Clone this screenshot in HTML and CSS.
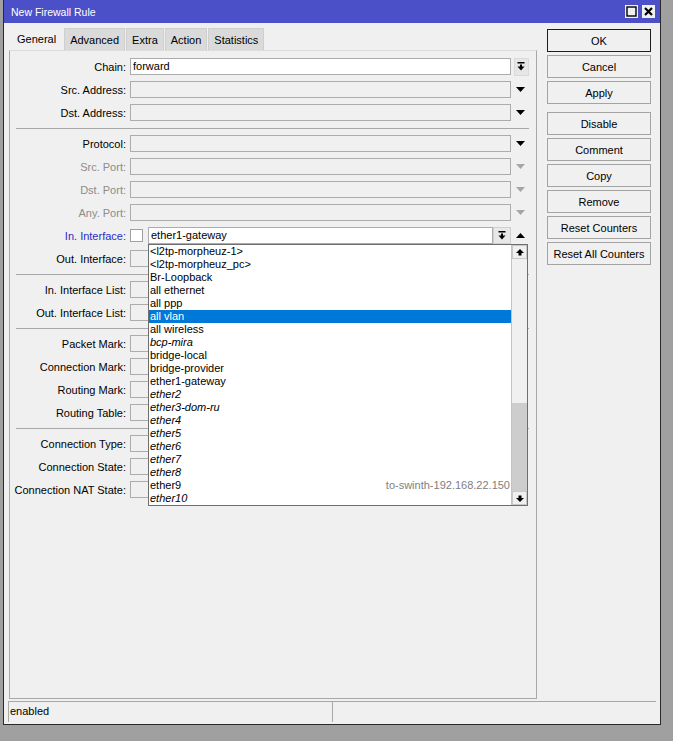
FILE: index.html
```html
<!DOCTYPE html>
<html lang="en">
<head>
    <meta charset="UTF-8">
    <title>New Firewall Rule</title>
    <link rel="stylesheet" href="styles.css">
</head>
<body>
<div class="window">
    <div class="titlebar">
        <span class="title">New Firewall Rule</span>
        <span class="wbtn"><svg width="11" height="11" viewBox="0 0 11 11"><rect x="1" y="1" width="9" height="9" fill="none" stroke="#000" stroke-width="1.4"/></svg></span>
        <span class="wbtn"><svg width="11" height="11" viewBox="0 0 11 11"><path d="M2 2 L9 9 M9 2 L2 9" stroke="#000" stroke-width="2.2"/></svg></span>
    </div>

    <div class="main">
        <div class="left">
            <ul class="tabs">
                <li class="active">General</li>
                <li>Advanced</li>
                <li>Extra</li>
                <li>Action</li>
                <li>Statistics</li>
            </ul>
            <div class="panel">
                <!-- addresses -->
                <div class="section">
                    <div class="row">
                        <span class="label">Chain:</span>
                        <span class="field white">forward</span>
                        <span class="cell"><span class="dbtn"><svg width="8" height="9" viewBox="0 0 8 9"><rect x="0.5" y="0" width="7" height="1.5"/><rect x="3" y="2.5" width="2" height="2.5"/><polygon points="0.5,4.5 7.5,4.5 4,8.5"/></svg></span></span>
                    </div>
                    <div class="row">
                        <span class="label">Src. Address:</span>
                        <span class="field"></span>
                        <span class="cell"><svg class="tri" width="9" height="5" viewBox="0 0 9 5"><polygon points="0,0 9,0 4.5,5"/></svg></span>
                    </div>
                    <div class="row">
                        <span class="label">Dst. Address:</span>
                        <span class="field"></span>
                        <span class="cell"><svg class="tri" width="9" height="5" viewBox="0 0 9 5"><polygon points="0,0 9,0 4.5,5"/></svg></span>
                    </div>
                </div>
                <div class="sep"></div>

                <!-- protocol / interfaces -->
                <div class="section">
                    <div class="row">
                        <span class="label">Protocol:</span>
                        <span class="field"></span>
                        <span class="cell"><svg class="tri" width="9" height="5" viewBox="0 0 9 5"><polygon points="0,0 9,0 4.5,5"/></svg></span>
                    </div>
                    <div class="row">
                        <span class="label dim">Src. Port:</span>
                        <span class="field"></span>
                        <span class="cell"><svg class="tri dim" width="9" height="5" viewBox="0 0 9 5"><polygon points="0,0 9,0 4.5,5"/></svg></span>
                    </div>
                    <div class="row">
                        <span class="label dim">Dst. Port:</span>
                        <span class="field"></span>
                        <span class="cell"><svg class="tri dim" width="9" height="5" viewBox="0 0 9 5"><polygon points="0,0 9,0 4.5,5"/></svg></span>
                    </div>
                    <div class="row">
                        <span class="label dim">Any. Port:</span>
                        <span class="field"></span>
                        <span class="cell"><svg class="tri dim" width="9" height="5" viewBox="0 0 9 5"><polygon points="0,0 9,0 4.5,5"/></svg></span>
                    </div>
                    <div class="row">
                        <span class="label blue">In. Interface:</span>
                        <span class="check"></span>
                        <div class="combo">
                            <span class="field white">ether1-gateway</span>
                            <span class="ibtn"><svg width="8" height="9" viewBox="0 0 8 9"><rect x="0.5" y="0" width="7" height="1.5"/><rect x="3" y="2.5" width="2" height="2.5"/><polygon points="0.5,4.5 7.5,4.5 4,8.5"/></svg></span>
                            <span class="cell"><svg class="tri" width="9" height="5" viewBox="0 0 9 5"><polygon points="0,5 9,5 4.5,0"/></svg></span>

                            <div class="dropdown">
                                <ul class="items">
                                    <li>&lt;l2tp-morpheuz-1&gt;</li>
                                    <li>&lt;l2tp-morpheuz_pc&gt;</li>
                                    <li>Br-Loopback</li>
                                    <li>all ethernet</li>
                                    <li>all ppp</li>
                                    <li class="selected">all vlan</li>
                                    <li>all wireless</li>
                                    <li class="it">bcp-mira</li>
                                    <li>bridge-local</li>
                                    <li>bridge-provider</li>
                                    <li>ether1-gateway</li>
                                    <li class="it">ether2</li>
                                    <li class="it">ether3-dom-ru</li>
                                    <li class="it">ether4</li>
                                    <li class="it">ether5</li>
                                    <li class="it">ether6</li>
                                    <li class="it">ether7</li>
                                    <li class="it">ether8</li>
                                    <li>ether9<span class="note">to-swinth-192.168.22.150</span></li>
                                    <li class="it">ether10</li>
                                </ul>
                                <div class="scrollbar">
                                    <span class="sbtn"><svg width="8" height="7" viewBox="0 0 8 7"><polygon points="0,4 8,4 4,0"/><rect x="2.5" y="4" width="3" height="2.5"/></svg></span>
                                    <span class="track"></span>
                                    <span class="thumb"></span>
                                    <span class="sbtn"><svg width="8" height="7" viewBox="0 0 8 7"><polygon points="0,3 8,3 4,7"/><rect x="2.5" y="0.5" width="3" height="2.5"/></svg></span>
                                </div>
                            </div>
                        </div>
                    </div>
                    <div class="row">
                        <span class="label">Out. Interface:</span>
                        <span class="field"></span>
                        <span class="cell"></span>
                    </div>
                </div>
                <div class="sep"></div>

                <!-- interface lists -->
                <div class="section">
                    <div class="row">
                        <span class="label">In. Interface List:</span>
                        <span class="field"></span>
                        <span class="cell"></span>
                    </div>
                    <div class="row">
                        <span class="label">Out. Interface List:</span>
                        <span class="field"></span>
                        <span class="cell"></span>
                    </div>
                </div>
                <div class="sep"></div>

                <!-- marks -->
                <div class="section">
                    <div class="row">
                        <span class="label">Packet Mark:</span>
                        <span class="field"></span>
                        <span class="cell"></span>
                    </div>
                    <div class="row">
                        <span class="label">Connection Mark:</span>
                        <span class="field"></span>
                        <span class="cell"></span>
                    </div>
                    <div class="row">
                        <span class="label">Routing Mark:</span>
                        <span class="field"></span>
                        <span class="cell"></span>
                    </div>
                    <div class="row">
                        <span class="label">Routing Table:</span>
                        <span class="field"></span>
                        <span class="cell"></span>
                    </div>
                </div>
                <div class="sep"></div>

                <!-- connection -->
                <div class="section">
                    <div class="row">
                        <span class="label">Connection Type:</span>
                        <span class="field"></span>
                        <span class="cell"></span>
                    </div>
                    <div class="row">
                        <span class="label">Connection State:</span>
                        <span class="field"></span>
                        <span class="cell"></span>
                    </div>
                    <div class="row">
                        <span class="label">Connection NAT State:</span>
                        <span class="field"></span>
                        <span class="cell"></span>
                    </div>
                </div>
            </div>
        </div>

        <div class="buttons">
            <button class="default">OK</button>
            <button>Cancel</button>
            <button class="gap-after">Apply</button>
            <button>Disable</button>
            <button>Comment</button>
            <button>Copy</button>
            <button>Remove</button>
            <button>Reset Counters</button>
            <button>Reset All Counters</button>
        </div>
    </div>

    <div class="statusbar">
        <div class="status-cell">enabled</div>
        <div class="status-cell"></div>
    </div>
</div>
</body>
</html>
```

FILE: styles.css
```css
body { margin: 0; background: #a0a0a0; font-family: "Liberation Sans", Arial, sans-serif; font-size: 11px; color: #000; }

.window { margin-left: 3px; width: 658px; height: 725px; box-sizing: border-box; background: #f0f0f0; border: 1px solid #2a2a2a; border-top: none; }

/* title bar */
.titlebar { height: 23px; background: #4b50c8; display: flex; align-items: center; padding: 0 5px 0 7px; }
.title { flex: 1; color: #fff; font-size: 10.5px; }
.wbtn { width: 13px; height: 13px; background: #f0f0f0; display: flex; align-items: center; justify-content: center; margin-left: 4px; }

.main { display: flex; }
.left { margin: 4px 0 0 5px; }

/* tabs */
.tabs { list-style: none; margin: 0; padding: 0 0 0 1px; display: flex; height: 23px; }
.tabs li { padding: 0 5px; line-height: 22px; margin-top: 1px; background: #dadada; border: 1px solid #cfcfcf; border-bottom: none; margin-right: 1px; }
.tabs li.active { padding: 0 6px; background: #f0f0f0; border-color: #f0f0f0; margin-top: -1px; line-height: 24px; }

.panel { width: 528px; height: 649px; box-sizing: border-box; border: 1px solid #a8a8a8; border-top-color: #dcdcdc; padding-top: 7px; }

.section { display: flex; flex-direction: column; gap: 6px; }
.sep { height: 1px; background: #a8a8a8; margin: 7px 0 6px 6px; width: 513px; }

.row { display: flex; height: 17px; line-height: 15px; }
.label { width: 116px; text-align: right; margin-right: 4px; white-space: nowrap; line-height: 18px; }
.label.dim { color: #8c8c8c; }
.label.blue { color: #2c2cc4; }

.field { width: 381px; height: 17px; box-sizing: border-box; border: 1px solid #acacac; background: #f0f0f0; padding-left: 2px; }
.field.white { background: #fff; }

.cell { width: 18px; height: 17px; display: flex; align-items: center; justify-content: center; }
.tri { fill: #000; }
.tri.dim { fill: #a6a6a6; }
.dbtn { width: 13px; height: 16px; background: #e6e6e6; border: 1px solid #dadada; display: flex; align-items: center; justify-content: center; margin-left: 2px; }

.check { width: 13px; height: 13px; box-sizing: border-box; border: 1px solid #a0a0a0; background: #fff; margin: 2px 5px 0 0; }

.combo { position: relative; display: flex; width: 381px; }
.combo .field { width: 345px; }
.ibtn { width: 18px; height: 17px; box-sizing: border-box; background: #e8e8e8; border: 1px solid #d0d0d0; display: flex; align-items: center; justify-content: center; }

/* drop-down list */
.dropdown { position: absolute; left: 0; top: 17px; width: 380px; height: 262px; box-sizing: border-box; background: #fff; border: 1px solid #6e6e6e; display: flex; z-index: 5; }
.items { list-style: none; margin: 0; padding: 0; flex: 1; }
.items li { height: 13px; line-height: 13px; padding: 0 1px 0 1px; display: flex; justify-content: space-between; white-space: nowrap; }
.items li.it { font-style: italic; }
.items li.selected { background: #0078d7; color: #fff; }
.note { color: #808080; }

.scrollbar { width: 16px; display: flex; flex-direction: column; background: #f0f0f0; border-left: 1px solid #c4c4c4; box-sizing: border-box; }
.sbtn { height: 14px; box-sizing: border-box; border: 1px solid #c8c8c8; background: #f0f0f0; display: flex; align-items: center; justify-content: center; }
.track { height: 144px; }
.thumb { height: 88px; background: #cdcdcd; }

/* right buttons */
.buttons { margin: 6px 0 0 10px; width: 104px; display: flex; flex-direction: column; }
.buttons button { height: 23px; margin-bottom: 3px; background: #f0f0f0; border: 1px solid #a4a4a4; font-family: inherit; font-size: 11px; color: #000; padding: 0; }
.buttons button.default { border-color: #1e1e1e; }
.buttons button.gap-after { margin-bottom: 8px; }

/* status bar */
.statusbar { display: flex; margin: 2px 4px 0; height: 20px; border-top: 1px solid #a8a8a8; border-left: 1px solid #a8a8a8; }
.status-cell { flex: 1; padding-left: 1px; line-height: 19px; }
.status-cell:first-child { flex: 0 0 322px; border-right: 1px solid #a8a8a8; }
```
